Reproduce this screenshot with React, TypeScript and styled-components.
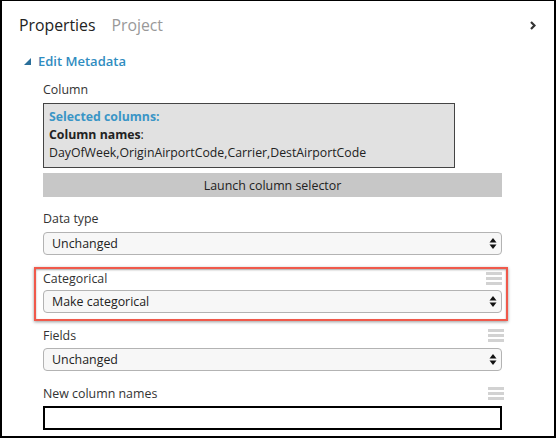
import React from "react";
import styled, { createGlobalStyle } from "styled-components";

const GlobalStyle = createGlobalStyle`
  html, body { margin: 0; padding: 0; background: #fff; }
  body { font-family: "Open Sans", "Noto Sans", sans-serif; color: #333; }
  * { box-sizing: border-box; }
`;

const Frame = styled.div`
  width: 556px;
  height: 438px;
  border-style: solid;
  border-color: #000;
  border-width: 1px 2px 2px 2px;
  background: #fff;
  overflow: hidden;
  display: flex;
  flex-direction: column;
`;

const Header = styled.div`
  display: flex;
  align-items: center;
  justify-content: space-between;
  margin-top: 13px;
  height: 22px;
  padding: 0 18px 0 17px;
`;

const Tabs = styled.div`
  display: flex;
  gap: 16px;
`;

const Tab = styled.span<{ $active?: boolean }>`
  font-size: 15.8px;
  line-height: 22px;
  color: ${(p) => (p.$active ? "#222" : "#999")};
`;

const SectionHeader = styled.div`
  display: flex;
  align-items: center;
  gap: 7px;
  margin-top: 16px;
  height: 18px;
  padding-left: 22px;
  font-size: 13px;
  font-weight: 600;
  color: #2f8cc0;
`;

const Content = styled.div`
  display: flex;
  flex-direction: column;
  padding-left: 41px;
  width: 502px;
`;

const LabelRow = styled.div<{ $mt: number }>`
  display: flex;
  align-items: center;
  justify-content: space-between;
  height: 18px;
  margin-top: ${(p) => p.$mt}px;
  font-size: 12.4px;
  color: #333;
`;

const Handle = styled.div`
  display: flex;
  flex-direction: column;
  gap: 2px;
  width: 16px;
  span {
    display: block;
    height: 3px;
    background: #d2d2d2;
  }
`;

const SelectedBox = styled.div`
  margin-top: 5px;
  width: 412px;
  height: 65px;
  border: 1px solid #444;
  background: #e1e1e1;
  padding: 4px 5px;
  font-size: 12.3px;
  line-height: 18px;
  color: #222;
`;

const BlueBold = styled.div`
  font-weight: 700;
  color: #3a95c6;
`;

const Bold = styled.span`
  font-weight: 700;
`;

const LaunchButton = styled.div`
  margin-top: 5px;
  height: 24px;
  width: 459px;
  background: #c7c7c7;
  display: flex;
  align-items: center;
  justify-content: center;
  font-size: 12.4px;
  color: #222;
`;

const Select = styled.div<{ $mt: number }>`
  margin-top: ${(p) => p.$mt}px;
  height: 23px;
  width: 459px;
  border: 1px solid #b3b3b3;
  border-radius: 4px;
  background: #f7f7f7;
  display: flex;
  align-items: center;
  justify-content: space-between;
  padding: 0 4px 0 8px;
  font-size: 12.4px;
  color: #222;
`;

const TextInput = styled.div`
  margin-top: 4px;
  height: 24px;
  width: 459px;
  border: 2px solid #000;
  background: #fff;
`;

const Highlight = styled.div`
  margin-top: 12px;
  margin-left: -9px;
  width: 474px;
  border: 2px solid #f0594b;
  box-shadow: 0 1px 3px rgba(0, 0, 0, 0.4), inset 0 1px 2px rgba(0, 0, 0, 0.35);
  padding: 0 4px 6px 7px;
  display: flex;
  flex-direction: column;
`;

const Arrows = () => (
  <svg width="8" height="11" viewBox="0 0 8 11">
    <polygon points="4,0 7.5,4.5 0.5,4.5" fill="#111" />
    <polygon points="4,11 7.5,6.5 0.5,6.5" fill="#111" />
  </svg>
);

const Bars = () => (
  <Handle>
    <span />
    <span />
    <span />
  </Handle>
);

export default function App() {
  return (
    <>
      <GlobalStyle />
      <Frame>
        <Header>
          <Tabs>
            <Tab $active>Properties</Tab>
            <Tab>Project</Tab>
          </Tabs>
          <svg width="6" height="9" viewBox="0 0 6 9">
            <polyline points="1,1 4.5,4.5 1,8" fill="none" stroke="#333" strokeWidth="2.2" />
          </svg>
        </Header>
        <SectionHeader>
          <svg width="7" height="7" viewBox="0 0 7 7">
            <polygon points="7,0 7,7 0,7" fill="#2a6f9a" />
          </svg>
          Edit Metadata
        </SectionHeader>
        <Content>
          <LabelRow $mt={10}>Column</LabelRow>
          <SelectedBox>
            <BlueBold>Selected columns:</BlueBold>
            <div>
              <Bold>Column names</Bold>:
            </div>
            <div>DayOfWeek,OriginAirportCode,Carrier,DestAirportCode</div>
          </SelectedBox>
          <LaunchButton>Launch column selector</LaunchButton>
          <LabelRow $mt={12}>Data type</LabelRow>
          <Select $mt={5}>
            Unchanged
            <Arrows />
          </Select>
          <Highlight>
            <LabelRow $mt={0}>
              Categorical
              <Bars />
            </LabelRow>
            <Select $mt={3}>
              Make categorical
              <Arrows />
            </Select>
          </Highlight>
          <LabelRow $mt={5}>
            Fields
            <Bars />
          </LabelRow>
          <Select $mt={4}>
            Unchanged
            <Arrows />
          </Select>
          <LabelRow $mt={13}>
            New column names
            <Bars />
          </LabelRow>
          <TextInput />
        </Content>
      </Frame>
    </>
  );
}
